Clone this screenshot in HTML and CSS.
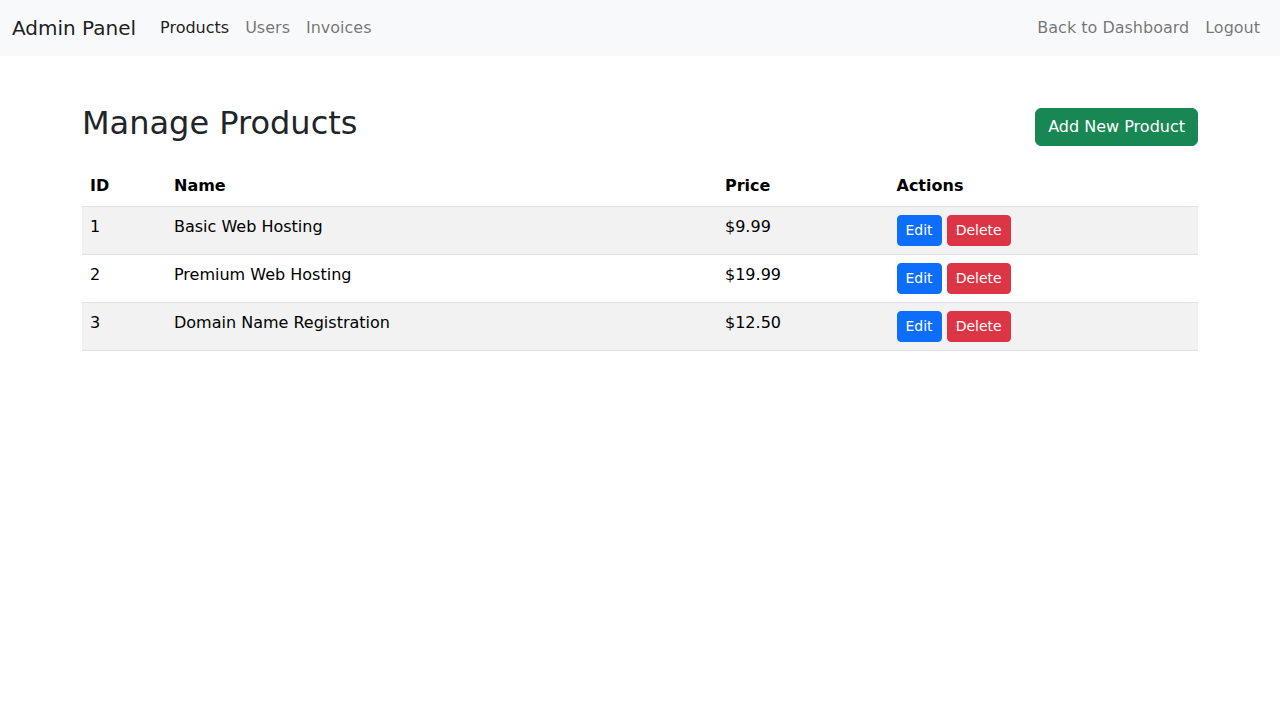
FILE: index.html
```html
<!DOCTYPE html>
<html lang="en">
<head>
<meta charset="utf-8">
<title>Admin Panel - Manage Products</title>
<link rel="stylesheet" href="styles.css">
</head>
<body>
<nav class="navbar">
  <div class="navbar-inner">
    <a class="brand" href="#">Admin Panel</a>
    <ul class="nav">
      <li><a class="nav-link active" href="#">Products</a></li>
      <li><a class="nav-link" href="#">Users</a></li>
      <li><a class="nav-link" href="#">Invoices</a></li>
    </ul>
    <ul class="nav nav-right">
      <li><a class="nav-link" href="#">Back to Dashboard</a></li>
      <li><a class="nav-link" href="#">Logout</a></li>
    </ul>
  </div>
</nav>
<main class="container">
  <div class="header-row">
    <h2 class="title">Manage Products</h2>
    <a class="btn btn-success" href="#">Add New Product</a>
  </div>
  <table class="table">
    <colgroup>
      <col class="col-id">
      <col class="col-name">
      <col class="col-price">
      <col class="col-actions">
    </colgroup>
    <thead>
      <tr><th>ID</th><th>Name</th><th>Price</th><th>Actions</th></tr>
    </thead>
    <tbody>
      <tr class="striped">
        <td>1</td><td>Basic Web Hosting</td><td>$9.99</td>
        <td><div class="actions"><a class="btn-sm btn-primary" href="#">Edit</a><a class="btn-sm btn-danger" href="#">Delete</a></div></td>
      </tr>
      <tr>
        <td>2</td><td>Premium Web Hosting</td><td>$19.99</td>
        <td><div class="actions"><a class="btn-sm btn-primary" href="#">Edit</a><a class="btn-sm btn-danger" href="#">Delete</a></div></td>
      </tr>
      <tr class="striped">
        <td>3</td><td>Domain Name Registration</td><td>$12.50</td>
        <td><div class="actions"><a class="btn-sm btn-primary" href="#">Edit</a><a class="btn-sm btn-danger" href="#">Delete</a></div></td>
      </tr>
    </tbody>
  </table>
</main>
</body>
</html>
```
FILE: styles.css
```css
* { box-sizing: border-box; }
html, body { margin: 0; padding: 0; }
body {
  font-family: "DejaVu Sans", sans-serif;
  font-size: 16px;
  line-height: 1.5;
  color: #212529;
  background: #fff;
}
a { text-decoration: none; }

.navbar {
  background: #f8f9fa;
  padding: 8px 0;
}
.navbar-inner {
  display: flex;
  align-items: center;
  padding: 0 12px;
}
.brand {
  font-size: 20px;
  line-height: 30px;
  padding: 5px 0;
  margin-right: 16px;
  color: rgba(0,0,0,0.9);
}
.nav {
  display: flex;
  list-style: none;
  margin: 0;
  padding: 0;
}
.nav-right { margin-left: auto; }
.nav-link {
  display: block;
  padding: 8px;
  line-height: 24px;
  color: rgba(0,0,0,0.55);
}
.nav-link.active { color: rgba(0,0,0,0.9); }

.container {
  max-width: 1140px;
  margin: 48px auto 0;
  padding: 0 12px;
}
.header-row {
  display: flex;
  justify-content: space-between;
  align-items: center;
  margin-bottom: 16px;
}
.title {
  font-size: 32px;
  font-weight: 500;
  line-height: 1.2;
  margin: 0 0 8px;
}
.btn {
  display: inline-block;
  padding: 6px 12px;
  font-size: 16px;
  line-height: 24px;
  border: 1px solid transparent;
  border-radius: 6px;
  color: #fff;
}
.btn-success { background: #198754; border-color: #198754; }

.table {
  width: 100%;
  border-collapse: collapse;
  color: #000;
  table-layout: fixed;
}
.col-id { width: 84px; }
.col-name { width: 551px; }
.col-price { width: 171.5px; }
.col-actions { width: 309.5px; }
.table th, .table td {
  padding: 8px;
  text-align: left;
  vertical-align: top;
  border-bottom: 1px solid #dee2e6;
}
.table th { font-weight: 700; }
.table tr.striped td { background: #f2f2f2; }

.actions {
  display: flex;
  gap: 5px;
}
.btn-sm {
  display: inline-block;
  padding: 4px 8px;
  font-size: 14px;
  line-height: 21px;
  border: 1px solid transparent;
  border-radius: 4px;
  color: #fff;
}
.btn-primary { background: #0d6efd; border-color: #0d6efd; }
.btn-danger { background: #dc3545; border-color: #dc3545; }
```
